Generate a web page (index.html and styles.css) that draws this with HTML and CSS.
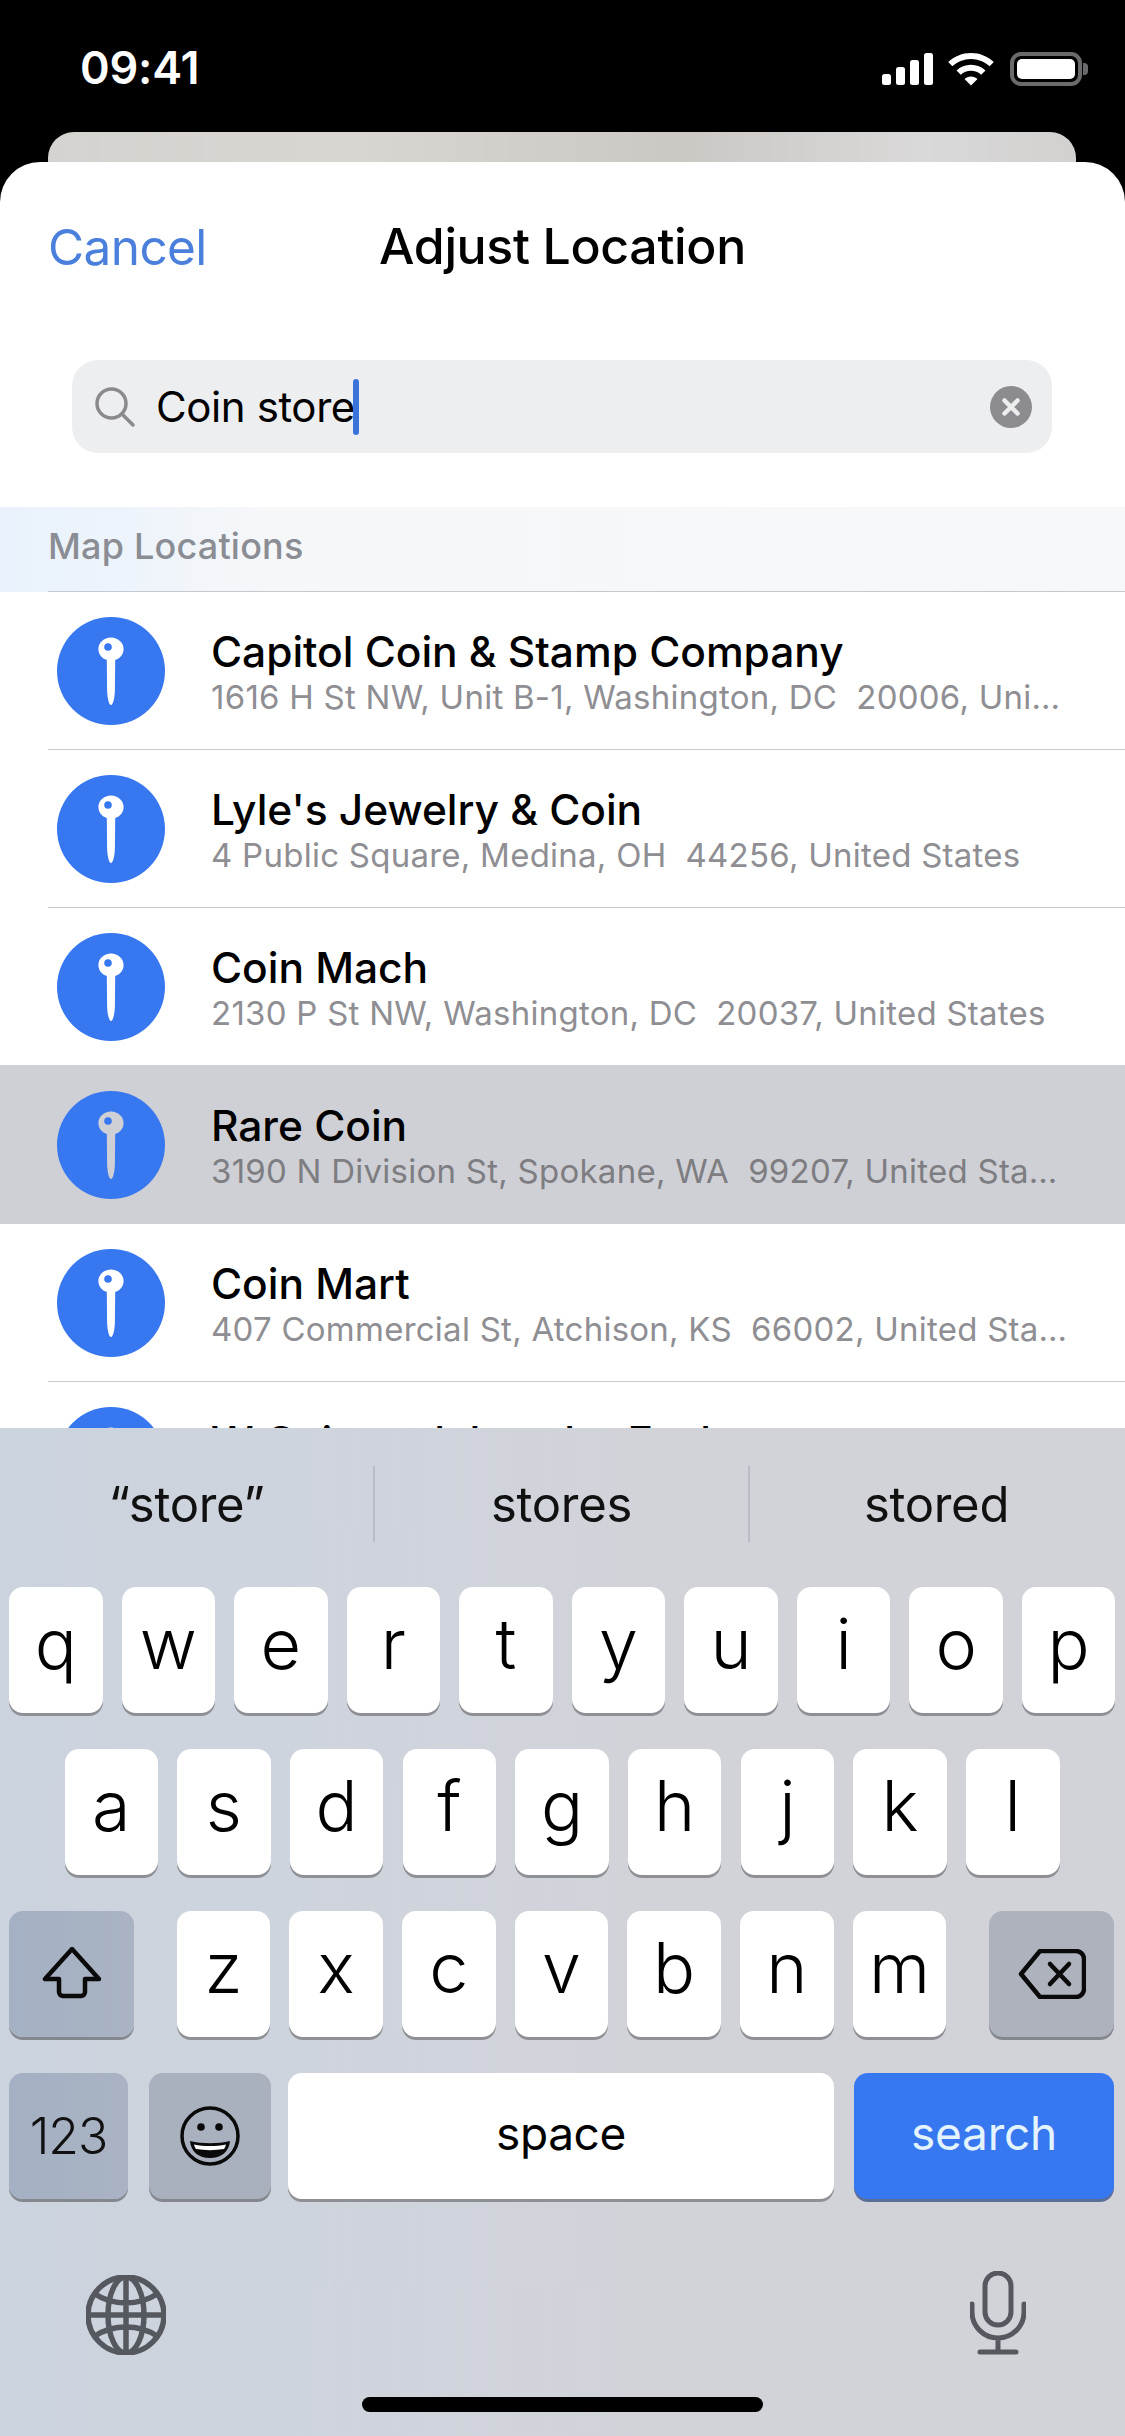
FILE: index.html
```html
<!DOCTYPE html>
<html lang="en">
<head>
<meta charset="utf-8">
<title>Adjust Location</title>
<link rel="stylesheet" href="styles.css">
</head>
<body>
<svg class="defs" width="0" height="0" aria-hidden="true">
  <symbol id="pin" viewBox="0 0 108 108">
    <circle cx="54" cy="54" r="54" fill="#3777f0"/>
    <path fill="currentColor" d="M54 20.500c7 0 12.600 5.200 12.600 11.500 0 5.400-3.600 9.600-8.400 11l-.3 30c-.2 9-2.200 15-3.900 15s-3.700-6-3.900-15l-.3-30c-4.800-1.400-8.400-5.600-8.400-11 0-6.300 5.600-11.500 12.600-11.500z"/>
    <ellipse cx="51" cy="30" rx="3.800" ry="3.800" fill="#3777f0"/>
  </symbol>
</svg>

<div class="screen">
  <header class="status">
    <span class="time">09:41</span>
    <div class="status-icons">
      <svg class="ic-signal" viewBox="0 0 52 32"><rect x="0" y="21" width="9" height="11" rx="2.500"/><rect x="14" y="14" width="9" height="18" rx="2.500"/><rect x="28" y="7" width="9" height="25" rx="2.500"/><rect x="42" y="0" width="9" height="32" rx="2.500"/></svg>
      <svg class="ic-wifi" viewBox="0 0 46 33"><path d="M23 0c8.800 0 16.800 3.400 22.800 9l-4.200 4.300C36.700 8.700 30.200 5.900 23 5.900S9.300 8.700 4.400 13.300L.2 9C6.200 3.400 14.200 0 23 0z"/><path d="M23 11.700c5.600 0 10.700 2.200 14.500 5.700l-4.300 4.300c-2.700-2.400-6.300-3.900-10.200-3.900s-7.500 1.500-10.200 3.900l-4.300-4.300c3.800-3.500 8.900-5.700 14.500-5.700z"/><path d="M23 23.400c2.500 0 4.800 1 6.500 2.500L23 32.500l-6.500-6.600c1.700-1.500 4-2.500 6.500-2.500z"/></svg>
      <div class="battery"><span class="battery-fill"></span></div>
    </div>
  </header>
  <div class="peek"></div>

  <main class="sheet">
    <div class="nav">
      <span class="cancel">Cancel</span>
      <h1 class="title">Adjust Location</h1>
    </div>
    <div class="search">
      <svg class="ic-search" viewBox="0 0 42 42"><circle cx="17.500" cy="17.500" r="14.500"/><path d="M28 28l11 11"/></svg>
      <span class="query">Coin store</span><span class="caret"></span>
      <svg class="ic-clear" viewBox="0 0 42 42"><circle cx="21" cy="21" r="21"/><path d="M14.500 14.500l13 13M27.500 14.500l-13 13"/></svg>
    </div>
    <div class="section"><span>Map Locations</span></div>
    <ul class="rows">
      <li class="row">
        <svg class="pin"><use href="#pin"/></svg>
        <div class="row-body"><div class="name">Capitol Coin &amp; Stamp Company</div><div class="addr">1616 H St NW, Unit B-1, Washington, DC&nbsp; 20006, Uni…</div></div>
      </li>
      <li class="row">
        <svg class="pin"><use href="#pin"/></svg>
        <div class="row-body"><div class="name">Lyle's Jewelry &amp; Coin</div><div class="addr">4 Public Square, Medina, OH&nbsp; 44256, United States</div></div>
      </li>
      <li class="row">
        <svg class="pin"><use href="#pin"/></svg>
        <div class="row-body"><div class="name">Coin Mach</div><div class="addr">2130 P St NW, Washington, DC&nbsp; 20037, United States</div></div>
      </li>
      <li class="row selected">
        <svg class="pin"><use href="#pin"/></svg>
        <div class="row-body"><div class="name">Rare Coin</div><div class="addr">3190 N Division St, Spokane, WA&nbsp; 99207, United Sta…</div></div>
      </li>
      <li class="row">
        <svg class="pin"><use href="#pin"/></svg>
        <div class="row-body"><div class="name">Coin Mart</div><div class="addr">407 Commercial St, Atchison, KS&nbsp; 66002, United Sta…</div></div>
      </li>
      <li class="row">
        <svg class="pin"><use href="#pin"/></svg>
        <div class="row-body"><div class="name">W Coin and Jewelry Exchange</div></div>
      </li>
    </ul>
  </main>

  <section class="keyboard">
    <div class="suggest">
      <span class="sug">“store”</span>
      <span class="sug">stores</span>
      <span class="sug">stored</span>
    </div>
    <div class="keys">
      <div class="krow">
        <span class="key">q</span><span class="key">w</span><span class="key">e</span><span class="key">r</span><span class="key">t</span><span class="key">y</span><span class="key">u</span><span class="key">i</span><span class="key">o</span><span class="key">p</span>
      </div>
      <div class="krow krow-mid">
        <span class="key">a</span><span class="key">s</span><span class="key">d</span><span class="key">f</span><span class="key">g</span><span class="key">h</span><span class="key">j</span><span class="key">k</span><span class="key">l</span>
      </div>
      <div class="krow krow-3">
        <span class="key fn shift"><svg class="ic-shift" viewBox="0 0 60 52"><path d="M30 2L3 32h14v13a4 4 0 0 0 4 4h18a4 4 0 0 0 4-4V32h14z"/></svg></span>
        <div class="letters">
          <span class="key">z</span><span class="key">x</span><span class="key">c</span><span class="key">v</span><span class="key">b</span><span class="key">n</span><span class="key">m</span>
        </div>
        <span class="key fn del"><svg class="ic-del" viewBox="0 0 68 50"><path d="M22 2h36a8 8 0 0 1 8 8v30a8 8 0 0 1-8 8H22L3 25z"/><path d="M32 15l19 20M51 15L32 35"/></svg></span>
      </div>
      <div class="krow krow-4">
        <span class="key fn k123">123</span>
        <span class="key fn emoji"><svg class="ic-emoji" viewBox="0 0 60 60"><circle cx="30" cy="30" r="28"/><circle class="solid" cx="21" cy="21" r="3.800"/><circle class="solid" cx="39" cy="21" r="3.800"/><path class="solid" d="M10 35c12 3 28 3 40 0-1 11-9 17-20 17S11 46 10 35z"/><path class="white" d="M14 38.500c10 2 22 2 32 0-.5 2-1 3-2 4.500-9 1.500-19 1.500-28 0-1-1.500-1.500-2.500-2-4.500z"/></svg></span>
        <span class="key space">space</span>
        <span class="key search-key">search</span>
      </div>
    </div>
    <div class="kb-bottom">
      <svg class="ic-globe" viewBox="0 0 80 80"><circle cx="40" cy="40" r="38"/><ellipse cx="40" cy="40" rx="18" ry="38"/><path d="M40 2v76M2 40h76M9 19c18 12 44 12 62 0M9 61c18-12 44-12 62 0"/></svg>
      <svg class="ic-mic" viewBox="0 0 56 84"><rect x="15" y="2" width="26" height="52" rx="13"/><path d="M2 33v8a26 26 0 0 0 52 0v-8M28 67v14M10 81h36"/></svg>
    </div>
    <div class="home-row"><span class="home-bar"></span></div>
  </section>
</div>
</body>
</html>
```
FILE: styles.css
```css
* { box-sizing: border-box; }
html, body { margin: 0; padding: 0; background: #000; }
body { font-family: Inter, "Liberation Sans", sans-serif; }
.defs { position: absolute; }
.screen { width: 1125px; height: 2436px; overflow: hidden; display: flex; flex-direction: column; background: #000; }

.status { height: 132px; flex: none; display: flex; justify-content: space-between; align-items: flex-start; padding: 43px 43px 0 80px; color: #fff; }
.time { font-size: 45px; line-height: 50px; font-weight: 600; letter-spacing: -.2px; }
.status-icons { display: flex; align-items: center; gap: 14px; padding-top: 9px; fill: #fff; }
.ic-signal { width: 52px; height: 32px; }
.ic-wifi { width: 46px; height: 33px; }
.battery { width: 72px; height: 34px; margin-left: 2px; border: 4px solid #6b6b6d; border-radius: 11px; padding: 3px; position: relative; }
.battery::after { content: ""; position: absolute; right: -10px; top: 7px; width: 5px; height: 12px; background: #6b6b6d; border-radius: 0 4px 4px 0; }
.battery-fill { display: block; height: 100%; background: #fff; border-radius: 5px; }

.peek { height: 30px; flex: none; margin: 0 49px 0 48px; border-radius: 26px 26px 0 0; background: linear-gradient(90deg, #d5d3cf, #d9d6d2 30%, #cbc8c4 62%, #dad9d9 85%, #d2d1d0); }

.sheet { height: 1266px; flex: none; background: #fff; border-radius: 40px 40px 0 0; overflow: hidden; }
.nav { height: 198px; padding: 55px 0 0 48px; position: relative; }
.cancel { font-size: 49.500px; line-height: 60px; color: #4a7fdb; letter-spacing: -.6px; display: block; }
.title { position: absolute; left: 0; right: 0; top: 54px; text-align: center; margin: 0; font-size: 50px; line-height: 60px; font-weight: 550; color: #000; letter-spacing: -.35px; }

.search { height: 93px; margin: 0 73px 0 72px; border-radius: 26px; background: #edeef0; display: flex; align-items: center; padding: 0 20px 0 22px; }
.ic-search { width: 42px; height: 42px; fill: none; stroke: #8a8a8e; stroke-width: 3.500; stroke-linecap: round; flex: none; }
.query { font-size: 42px; line-height: 50px; color: #000; margin-left: 20px; letter-spacing: -.4px; }
.caret { width: 6px; height: 56px; border-radius: 3px; background: #3a74db; margin-left: -2px; flex: none; }
.ic-clear { width: 42px; height: 42px; margin-left: auto; flex: none; fill: #8c8c90; stroke: none; }
.ic-clear path { stroke: #eceded; stroke-width: 4.500; stroke-linecap: round; fill: none; }

.section { height: 85px; margin-top: 54px; padding: 18px 0 0 48px; background: linear-gradient(90deg, #e9f2fc, #eef4fb 12%, #f6f7f9 24%, #f7f8f9); position: relative; font-size: 36px; line-height: 42px; font-weight: 500; color: #8a8d93; }
.section span { letter-spacing: .2px; }
.section::after { content: ""; position: absolute; left: 48px; right: 0; bottom: 0; height: 1px; background: #c5c8ce; }

.rows { list-style: none; margin: 0; padding: 0; }
.row { height: 158px; display: flex; align-items: center; padding-left: 57px; position: relative; background: #fff; }
.row::after { content: ""; position: absolute; left: 48px; right: 0; bottom: 0; height: 1px; background: #c9cacd; }
.row.selected { background: #cfd0d5; color: #cfd0d5; }
.row.selected::after { left: 0; background: #cfd0d5; }
.row:nth-child(3)::after { background: #cfd0d5; left: 0; }
.pin { width: 108px; height: 108px; flex: none; color: #fff; }
.selected .pin { color: #cfd0d5; }
.row-body { margin: 3px 0 0 47px; height: 88px; flex: 1; min-width: 0; }
.name { font-size: 42.500px; line-height: 46px; font-weight: 550; color: #000; letter-spacing: -.05px; white-space: nowrap; margin-left: -1px; }
.addr { font-size: 33px; line-height: 42px; color: #8e8e93; white-space: nowrap; letter-spacing: .25px; margin-left: -1px; margin-top: 1px; }
.selected .addr { color: #7d7d82; }

.keyboard { flex: 1; display: flex; flex-direction: column; background: linear-gradient(90deg, #cbd3de 0, #ced4dd 25%, #d2d3d9 60%, #d2d3d8 100%); }
.suggest { height: 159px; flex: none; display: flex; padding: 38px 2px 0 0; align-items: flex-start; }
.sug { flex: 1; height: 76px; display: flex; align-items: center; justify-content: center; font-size: 49px; color: #111; border-left: 2px solid #b9bdc5; letter-spacing: -.3px; }
.sug:first-child { border-left: 0; }

.keys { display: flex; flex-direction: column; gap: 36px; padding: 0 11px 0 9px; }
.krow { display: flex; gap: 19.050px; height: 126px; }
.krow-mid { padding-left: 55.500px; gap: 19.200px; }
.key { width: 93.500px; height: 126px; background: #fff; border-radius: 14px; box-shadow: 0 3px 0 #8f9096; display: flex; align-items: center; justify-content: center; font-size: 70px; line-height: 1; color: #000; flex: none; font-weight: 300; padding-bottom: 13px; }
.fn { background: linear-gradient(90deg, #a4b0c3, #a9b3c3); box-shadow: 0 3px 0 #84878e; }
.krow-3 { justify-content: space-between; gap: 0; }
.letters { display: flex; gap: 19.200px; }
.shift { width: 125px; padding: 0 0 2px; }
.del { width: 125px; padding: 0; background: #adb2bc; }
.ic-shift { width: 60px; height: 52px; fill: none; stroke: #0a0a0a; stroke-width: 4.500; stroke-linejoin: round; }
.ic-del { width: 68px; height: 50px; fill: none; stroke: #0a0a0a; stroke-width: 4.500; stroke-linejoin: round; stroke-linecap: round; }
.krow-4 { gap: 0; }
.k123 { width: 119px; font-size: 50px; color: #111; padding: 0; letter-spacing: -1px; }
.emoji { width: 122px; margin-left: 21px; padding: 0; background: #a9b1bf; }
.ic-emoji { width: 60px; height: 60px; fill: none; stroke: #0a0a0a; stroke-width: 3.500; }
.ic-emoji .solid { fill: #0a0a0a; stroke: none; }
.ic-emoji .white { fill: #fff; stroke: none; }
.space { width: 546px; margin-left: 17px; font-size: 46px; font-weight: 400; padding: 0 0 6px; letter-spacing: -.4px; }
.search-key { width: 260px; margin-left: 20px; font-size: 46px; font-weight: 400; color: #e3f4ff; background: #3777f0; padding: 0 0 6px; box-shadow: 0 3px 0 #5a6f96; letter-spacing: -.2px; }

.kb-bottom { display: flex; justify-content: space-between; align-items: flex-end; padding: 72px 99px 0 86px; }
.ic-globe { width: 80px; height: 80px; fill: none; stroke: #55585f; stroke-width: 5.500; }
.ic-mic { width: 56px; height: 84px; fill: none; stroke: #55585f; stroke-width: 5; stroke-linecap: round; }
.home-row { display: flex; justify-content: center; padding-top: 42px; }
.home-bar { width: 401px; height: 15px; border-radius: 8px; background: #000; }
```
